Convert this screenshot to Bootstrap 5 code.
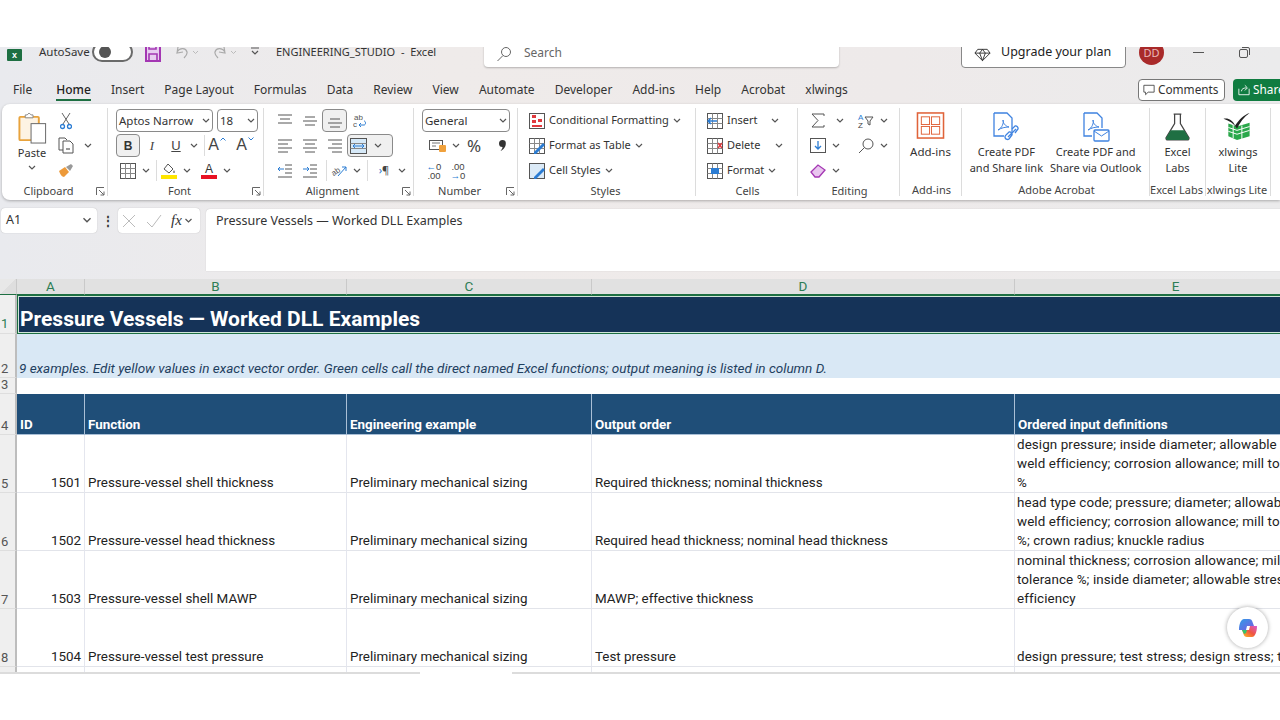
<!DOCTYPE html>
<html lang="en">
<head>
  <meta charset="UTF-8" />
  <title>ENGINEERING_STUDIO - Excel</title>
  <link href="https://cdn.jsdelivr.net/npm/bootstrap@5.3.0/dist/css/bootstrap.min.css" rel="stylesheet" />
  <style>
    html, body { height: 720px; overflow: hidden; background: #fff; }
    body { font-family: "Noto Sans", "Open Sans", sans-serif; font-size: 12px; color: #333; }

    .app-shell { margin-top: 47px; height: 625px; overflow: hidden; position: relative;
      background: linear-gradient(90deg, #e9eaee 0, #efebea 35%, #eeeaea 70%, #ebebec 100%); }

    /* title bar */
    .title-bar { height: 30px; margin-top: -10px; white-space: nowrap; }
    .title-bar > * { flex: none; }
    .xl-logo { width: 15px; height: 12px; margin: 12px 0 0 7px; background: #1d6f42; border-radius: 1px; color: #fff;
      font: 700 9px/12px "Liberation Sans", sans-serif; text-align: center; }
    .auto-save { margin-left: 17px; width: 53px; font-size: 11.5px; line-height: 30px; }
    .save-toggle { width: 41px; height: 20px; border: 2px solid #6a6a6a; border-radius: 10px; background: #fff; margin-top: 5px; padding: 2px 0 0 5px; }
    .save-toggle i { display: block; width: 12px; height: 12px; border-radius: 50%; background: #555; }
    .save-ic { margin: 4px 0 0 11px; }
    .undo-ic { margin: 4px 0 0 11px; }
    .redo-ic { margin: 4px 0 0 12px; }
    .qat-ic { margin: 8px 0 0 13px; }
    .doc-name { width: 224px; padding-left: 16px; font-size: 11px; line-height: 30px; }
    .search-box { width: 355px; height: 30px; background: #fff; border-radius: 4px; box-shadow: 0 1px 2px rgba(0,0,0,.25); color: #666; padding: 0 0 5px 12px; gap: 12px; }
    .upgrade-btn { width: 165px; height: 31px; margin-left: 122px; background: #fff; border: 1px solid #888; border-radius: 4px; font-size: 12.5px; gap: 10px; padding: 0 0 5px 12px; color: #222; }
    .user-dot { width: 25px; height: 25px; margin: 3px 0 0 13px; border-radius: 50%; background: #a92a2a; color: #e9b9b9; font-size: 11px; text-align: center; line-height: 25px; }
    .win-min { width: 11px; height: 1px; background: #555; margin: 15px 0 0 29px; }
    .win-max { margin: 10px 0 0 35px; }

    /* tabs */
    .tab-row { height: 25px; margin-top: 12px; padding-left: 13px; gap: 20.1px; font-size: 12px; white-space: nowrap; }
    .tab-item { line-height: 22px; color: #333; }
    .tab-on { color: #222; font-weight: 500; border-bottom: 2px solid #1d6f42; height: 22px; }
    .cmt-btn { position: absolute; top: 32px; left: 1138px; width: 87px; height: 22px; background: #fff; border: 1px solid #777; border-radius: 4px; gap: 3px; padding-left: 4px; font-size: 11.8px; }
    .share-btn { position: absolute; top: 32px; left: 1233px; width: 60px; height: 22px; background: #107c41; border-radius: 4px; color: #fff; gap: 3px; padding-left: 5px; font-size: 11.8px; }

    /* ribbon */
    .rib-bar { height: 96px; margin-left: 2px; background: #fff; border-radius: 8px 0 0 8px; box-shadow: 0 1px 3px rgba(0,0,0,.28); padding-top: 4px; }
    .rib-grp { flex: none; height: 88px; display: flex; flex-direction: column; border-right: 1px solid #dcdcdc; }
    .g-clip { width: 106px; } .g-font { width: 156px; } .g-align { width: 150px; } .g-num { width: 104px; }
    .g-style { width: 178px; } .g-cells { width: 102px; } .g-edit { width: 102px; } .g-addin { width: 62px; }
    .g-pdf { width: 188px; } .g-labs { width: 56px; } .g-wings { width: 65px; }
    .grp-body { height: 77px; display: flex; }
    .grp-foot { display: grid; grid-template-columns: 1fr auto 1fr; font-size: 11px; line-height: 12px; color: #444; padding: 2px 2px 0 0; white-space: nowrap; }
    .grp-foot svg { justify-self: end; margin-top: 2px; }
    .foot-launch > span:nth-child(2) { transform: translateX(-5px); }
    .foot-plain > span:nth-child(2) { transform: translateX(2px); }
    .rib-row { height: 25px; display: flex; align-items: center; flex: none; white-space: nowrap; }
    .ic-cell { width: 24px; height: 23px; display: flex; align-items: center; justify-content: center; flex: none; }
    .ic-wide { width: 25px; }
    .ic-chev { width: 12px; height: 23px; display: flex; align-items: center; justify-content: center; flex: none; }
    .ic-on { background: #f0f0f0; border: 1px solid #8a8a8a; border-radius: 4px; }
    .rib-sep { width: 1px; height: 21px; background: #dcdcdc; flex: none; }
    .dd-box { height: 23px; background: #fff; border: 1px solid #8a8a8a; border-radius: 4px; padding: 0 2px; font-size: 11.5px; flex: none; display: flex; align-items: center; justify-content: space-between; color: #333; }
    .dd-font { width: 97px; } .dd-size { width: 41px; } .dd-merge { width: 46px; background: #f0f0f0; } .dd-num { width: 88px; }
    .big-btn { display: flex; flex-direction: column; align-items: center; text-align: center; line-height: 15.5px; font-size: 11px; flex: none; color: #333; }
    .paste-btn { width: 60px; }
    .paste-btn svg:first-child { margin: 4px 0 0 2px; }
    .paste-btn span { margin-top: 1px; }
    .clip-tools { margin-left: -8px; }
    .addin-ic { margin: 4px 0 5px; }
    .addin-btn { font-size: 11.5px; }
    .pdf-ic { margin: 4px 0 2px; }
    .pdf-wrap { gap: 7px; }
    .labs-ic { margin: 4px 0 3px; }
    .glyph-b { font: 700 12px "Liberation Sans", sans-serif; color: #333; }
    .glyph-i { font: italic 13px "Liberation Serif", serif; color: #444; }
    .glyph-u { font: 13px "Liberation Sans", sans-serif; text-decoration: underline; color: #444; }
    .glyph-a { font: 16px "Liberation Sans", sans-serif; color: #444; gap: 1px; align-items: flex-start; padding-top: 2px; }
    .glyph-a svg { margin-top: 1px; }
    .fill-bar { display: block; width: 16px; height: 4px; background: #ffe600; }
    .color-a { font: 12px/12px "Liberation Sans", sans-serif; color: #333; border-bottom: 4px solid #e81123; width: 16px; text-align: center; }
    .para-ic { font-size: 11px; color: #444; }
    .para-ic span { color: #2b7cd3; }
    .num-pc { font-size: 17px; color: #444; }
    .tiny-num { font: 9.5px/9px "Liberation Sans", sans-serif; color: #444; }
    .tiny-num span span { color: #2b7cd3; }
    .style-lbl { font-size: 11px; white-space: nowrap; }
    .lbl-ins { width: 40px; } .lbl-del { width: 44px; }
    .g-style .grp-body, .g-cells .grp-body { padding-left: 11px; }
    .edit-col { width: 48px; }

    /* formula bar */
    .fx-row { height: 79px; padding-top: 8px; }
    .name-box { width: 96px; height: 25px; margin-left: 1px; background: #fff; border-radius: 4px; box-shadow: 0 0 1px rgba(0,0,0,.3); padding: 0 5px; font-size: 12.5px; }
    .fx-dots { width: 21px; text-align: center; font-weight: 700; line-height: 25px; }
    .fx-tools { width: 82px; height: 25px; background: #fff; border-radius: 4px; box-shadow: 0 0 1px rgba(0,0,0,.3); padding: 0 4px; gap: 10px; }
    .fx-tools em { font: italic 15px "Liberation Serif", serif; color: #333; margin-left: -1px; }
    .fx-tools svg:last-child { margin-left: -8px; }
    .fx-input { flex: 1; height: 62px; margin-left: 6px; margin-top: 1px; background: #fff; border-radius: 4px 0 0 0; padding: 3px 0 0 10px; font-size: 12.5px; color: #333; box-shadow: 0 0 1px rgba(0,0,0,.25); }

    /* sheet */
    .grid-wrap { height: 393px; overflow: hidden; background: #fff; }
    .xl-sheet { table-layout: fixed; width: 1337px; border-collapse: separate; border-spacing: 0; font-family: "Roboto", sans-serif; font-size: 13.4px; color: #222; }
    .xl-sheet td, .xl-sheet th { padding: 0 3px; vertical-align: bottom; font-weight: 400; white-space: nowrap; overflow: hidden; border-right: 1px solid #e4e6ee; border-bottom: 1px solid #e2e4ea; line-height: 19px; }
    .col-no { width: 17px; } .col-a { width: 68px; } .col-b { width: 262px; } .col-c { width: 245px; } .col-d { width: 423px; } .col-e { width: 322px; }
    .h-39 { height: 39px; } .h-44 { height: 44px; } .h-15 { height: 15px; } .h-41 { height: 41px; } .h-58 { height: 58px; } .h-20 { height: 20px; }
    .col-head th { height: 16px; background: #e1e1e1; color: #2d7d55; text-align: center; line-height: 15px; padding: 0; font-size: 13.5px; border-right: 1px solid #c9c9c9; border-bottom: 1px solid #1d6f42; }
    .xl-sheet .row-no { background: #efefef; color: #555; padding: 0 0 2px 1px; border-right: 2px solid #bdbdbd; border-bottom: 1px solid #dedede; font-size: 13px; text-align: left; line-height: 13px; }
    .xl-sheet .row-sel { color: #2d7d55; padding-bottom: 3px; }
    .xl-sheet .col-head th.grid-corner { background: linear-gradient(135deg, #e8e8e8 50%, #dedede 50%); }
    .xl-sheet td.title-cell { background: #153358; color: #fff; font-weight: 700; font-size: 21px; line-height: 30px; padding: 0 3px; box-shadow: inset 0 0 0 1px #1d6f42, inset 0 0 0 2px #cfe6d8; border: 0; }
    .xl-sheet td.note-cell { background: #d9e8f5; color: #1f4060; font-style: italic; font-size: 13.5px; padding-left: 2px; border-right: 0; border-bottom: 0; }
    .xl-sheet .head-cell { background: #1f4e78; color: #fff; font-weight: 700; border-right: 1px solid #a9bfd6; border-bottom: 1px solid #a9bfd6; }
    .xl-sheet td.id-cell { text-align: right; }
    .xl-sheet td.def-cell { letter-spacing: .1px; padding-left: 2px; }
    .sheet-end { height: 2px; background: linear-gradient(90deg, #dcdcdc 420px, #fff 420px, #fff 512px, #dcdcdc 512px); }

    .copilot-btn { position: absolute; left: 1227px; top: 560px; width: 41px; height: 41px; border-radius: 50%; background: #fff; box-shadow: 0 0 4px rgba(0,0,0,.35); display: flex; align-items: center; justify-content: center; }
  </style>
</head>
<body>

<svg width="0" height="0" class="d-block">
  <symbol id="chev" viewBox="0 0 8 6"><path d="M1 1l3 3 3-3" fill="none" stroke="#555" stroke-width="1.2"/></symbol>
  <symbol id="launch" viewBox="0 0 9 9"><path d="M.5 8V.5H8M3 3l5 5M8 4.5V8H4.5" fill="none" stroke="#666"/></symbol>
  <symbol id="al-top" viewBox="0 0 16 16"><path d="M1 2h14M3 6h10M1 10h14" stroke="#555" fill="none"/></symbol>
  <symbol id="al-mid" viewBox="0 0 16 16"><path d="M3 4h10M1 8h14M3 12h10" stroke="#555" fill="none"/></symbol>
  <symbol id="al-bot" viewBox="0 0 16 16"><path d="M3 6h10M1 10h14M3 14h10" stroke="#555" fill="none"/></symbol>
  <symbol id="tx-l" viewBox="0 0 16 16"><path d="M1 2h14M1 6h10M1 10h14M1 14h10" stroke="#555" fill="none"/></symbol>
  <symbol id="tx-c" viewBox="0 0 16 16"><path d="M1 2h14M3 6h10M1 10h14M3 14h10" stroke="#555" fill="none"/></symbol>
  <symbol id="tx-r" viewBox="0 0 16 16"><path d="M1 2h14M5 6h10M1 10h14M5 14h10" stroke="#555" fill="none"/></symbol>
  <symbol id="tbl-ic" viewBox="0 0 16 16"><rect x=".5" y=".5" width="15" height="15" fill="#fff" stroke="#555"/><path d="M.5 5.5h15M.5 10.5h15M5.5.5v15M10.5.5v15" stroke="#888" fill="none"/></symbol>
</svg>

<div class="app-shell">

  <!-- title bar -->
  <div class="title-bar d-flex">
    <div class="xl-logo">x</div>
    <div class="auto-save">AutoSave</div>
    <div class="save-toggle"><i></i></div>
    <svg class="save-ic" width="18" height="22" viewBox="0 0 18 22"><path d="M2 2h11l3 3v15H2z" fill="#e7cdf0" stroke="#a437b3" stroke-width="2"/><path d="M5 2v6h7V2M5 20v-7h8v7" fill="none" stroke="#a437b3" stroke-width="1.6"/></svg>
    <svg class="undo-ic" width="26" height="20" viewBox="0 0 26 20"><path d="M5 6l-1 6 6-1M4 11c3-5 9-4 10 0 .5 2-1 4-3 6" fill="none" stroke="#aaa" stroke-width="1.2"/><path d="M20 10l2.500 2.500L25 10" fill="none" stroke="#bbb"/></svg>
    <svg class="redo-ic" width="26" height="20" viewBox="0 0 26 20"><path d="M13 6l1 6-6-1M14 11C11 6 5 7 4 11c-.5 2 1 4 3 6" fill="none" stroke="#aaa" stroke-width="1.2"/><path d="M20 10l2.500 2.500L25 10" fill="none" stroke="#bbb"/></svg>
    <svg class="qat-ic" width="10" height="10" viewBox="0 0 10 10"><path d="M1 3h8M2 6l3 3 3-3" fill="none" stroke="#555" stroke-width="1.2"/></svg>
    <div class="doc-name">ENGINEERING_STUDIO&nbsp; -&nbsp; Excel</div>
    <div class="search-box d-flex align-items-end">
      <svg width="16" height="16" viewBox="0 0 16 16"><circle cx="10" cy="6" r="4.500" fill="none" stroke="#666"/><path d="M7 9.500L1.500 15" stroke="#666"/></svg>
      <span>Search</span>
    </div>
    <div class="upgrade-btn d-flex align-items-end">
      <svg width="17" height="14" viewBox="0 0 18 14"><path d="M4 1h10l3 4-8 8-8-8zM1 5h16M6 5l3 8 3-8M6 5l3-4 3 4" fill="none" stroke="#333"/></svg>
      <span>Upgrade your plan</span>
    </div>
    <div class="user-dot">DD</div>
    <div class="win-min"></div>
    <svg class="win-max" width="11" height="11" viewBox="0 0 11 11"><rect x=".5" y="2.500" width="8" height="8" rx="1.500" fill="none" stroke="#555"/><path d="M3 .5h6a1.500 1.500 0 0 1 1.500 1.500v6" fill="none" stroke="#555"/></svg>
  </div>

  <!-- tabs -->
  <div class="tab-row d-flex">
    <span class="tab-item">File</span>
    <span class="tab-item tab-on ms-1">Home</span>
    <span class="tab-item">Insert</span>
    <span class="tab-item">Page Layout</span>
    <span class="tab-item">Formulas</span>
    <span class="tab-item">Data</span>
    <span class="tab-item">Review</span>
    <span class="tab-item">View</span>
    <span class="tab-item">Automate</span>
    <span class="tab-item">Developer</span>
    <span class="tab-item">Add-ins</span>
    <span class="tab-item">Help</span>
    <span class="tab-item">Acrobat</span>
    <span class="tab-item">xlwings</span>
  </div>
  <div class="cmt-btn d-flex align-items-center">
    <svg width="12" height="12" viewBox="0 0 14 13"><path d="M1 1h12v8H6l-3 3V9H1z" fill="none" stroke="#444"/></svg>Comments
  </div>
  <div class="share-btn d-flex align-items-center">
    <svg width="12" height="12" viewBox="0 0 14 13"><path d="M1 5v7h12V5M4 8c0-3 3-4 6-4M8 1l3 3-3 3" fill="none" stroke="#fff"/></svg>Share
  </div>

  <!-- ribbon -->
  <div class="rib-bar d-flex">

    <div class="rib-grp g-clip">
      <div class="grp-body">
        <div class="big-btn paste-btn">
          <svg width="30" height="32" viewBox="0 0 30 33"><rect x="1" y="5" width="20" height="24" rx="1" fill="#fdf3e3" stroke="#e8a33d" stroke-width="2"/><path d="M7 6V3h2l2-2 2 2h2v3z" fill="#fff" stroke="#888"/><rect x="13" y="12" width="15" height="20" fill="#fff" stroke="#666"/></svg>
          <span>Paste</span>
          <svg class="mt-1" width="8" height="6"><use href="#chev"/></svg>
        </div>
        <div class="clip-tools">
          <div class="rib-row"><div class="ic-cell">
            <svg width="12" height="18" viewBox="0 0 12 18"><path d="M2 1l7 11M10 1L3 12" stroke="#666" fill="none"/><circle cx="2.500" cy="14.500" r="2" fill="none" stroke="#2b7cd3" stroke-width="1.300"/><circle cx="9.500" cy="14.500" r="2" fill="none" stroke="#2b7cd3" stroke-width="1.300"/></svg>
          </div></div>
          <div class="rib-row"><div class="ic-cell">
            <svg width="17" height="17" viewBox="0 0 17 17"><path d="M5 13H1V1h6l2 2" fill="none" stroke="#555"/><path d="M5 4h7l3 3v9H5z" fill="#fff" stroke="#555"/><path d="M8 11h4v2H8z" fill="#999"/></svg>
          </div><div class="ic-chev ms-1"><svg width="8" height="6"><use href="#chev"/></svg></div></div>
          <div class="rib-row"><div class="ic-cell">
            <svg width="16" height="15" viewBox="0 0 16 15"><path d="M1 8l6-4 4 5-5 5C4 14 2 11 1 8z" fill="#ed9a3a"/><path d="M8 4l5-3 2 2-3 5z" fill="#999"/></svg>
          </div></div>
        </div>
      </div>
      <div class="grp-foot foot-launch"><span></span><span>Clipboard</span><svg width="9" height="9"><use href="#launch"/></svg></div>
    </div>

    <div class="rib-grp g-font">
      <div class="grp-body flex-column ps-2">
        <div class="rib-row gap-1">
          <div class="dd-box dd-font">Aptos Narrow<svg width="8" height="6"><use href="#chev"/></svg></div>
          <div class="dd-box dd-size">18<svg width="8" height="6"><use href="#chev"/></svg></div>
        </div>
        <div class="rib-row">
          <div class="ic-cell ic-on glyph-b">B</div>
          <div class="ic-cell glyph-i">I</div>
          <div class="ic-cell glyph-u">U</div>
          <div class="ic-chev"><svg width="8" height="6"><use href="#chev"/></svg></div>
          <div class="rib-sep ms-1"></div>
          <div class="ic-cell glyph-a">A<svg width="6" height="4" viewBox="0 0 6 4"><path d="M.5 3.500L3 1l2.500 2.500" fill="none" stroke="#2b7cd3"/></svg></div>
          <div class="ic-cell glyph-a ms-1">A<svg width="6" height="4" viewBox="0 0 6 4"><path d="M.5.5L3 3 5.500.5" fill="none" stroke="#2b7cd3"/></svg></div>
        </div>
        <div class="rib-row">
          <div class="ic-cell"><svg width="16" height="16"><use href="#tbl-ic"/></svg></div>
          <div class="ic-chev"><svg width="8" height="6"><use href="#chev"/></svg></div>
          <div class="rib-sep ms-1"></div>
          <div class="ic-cell flex-column">
            <svg width="14" height="12" viewBox="0 0 14 12"><path d="M6 1l5 5-4 4-5-4z" fill="#fff" stroke="#555"/><path d="M12 7c1 2 1 3 0 3s-1-1 0-3z" fill="#555"/></svg>
            <span class="fill-bar"></span>
          </div>
          <div class="ic-chev"><svg width="8" height="6"><use href="#chev"/></svg></div>
          <div class="ic-cell ms-1"><span class="color-a">A</span></div>
          <div class="ic-chev"><svg width="8" height="6"><use href="#chev"/></svg></div>
        </div>
      </div>
      <div class="grp-foot foot-launch"><span></span><span>Font</span><svg width="9" height="9"><use href="#launch"/></svg></div>
    </div>

    <div class="rib-grp g-align">
      <div class="grp-body flex-column ps-2">
        <div class="rib-row">
          <div class="ic-cell ic-wide"><svg width="16" height="16"><use href="#al-top"/></svg></div>
          <div class="ic-cell ic-wide"><svg width="16" height="16"><use href="#al-mid"/></svg></div>
          <div class="ic-cell ic-on ic-wide"><svg width="16" height="16"><use href="#al-bot"/></svg></div>
          <div class="ic-cell ic-wide">
            <svg width="16" height="16" viewBox="0 0 16 16"><text x="2" y="7" font-size="8" fill="#555" font-family="Liberation Sans">ab</text><text x="1" y="14" font-size="8" fill="#555" font-family="Liberation Sans">c</text><path d="M7 12h5c2 0 2-4 0-4M9 10l-2 2 2 2" fill="none" stroke="#2b7cd3"/></svg>
          </div>
        </div>
        <div class="rib-row">
          <div class="ic-cell ic-wide"><svg width="16" height="16"><use href="#tx-l"/></svg></div>
          <div class="ic-cell ic-wide"><svg width="16" height="16"><use href="#tx-c"/></svg></div>
          <div class="ic-cell ic-wide"><svg width="16" height="16"><use href="#tx-r"/></svg></div>
          <div class="dd-box dd-merge">
            <svg width="18" height="16" viewBox="0 0 18 16"><rect x=".5" y=".5" width="16" height="15" fill="#d6e9f8" stroke="#555"/><path d="M.5 5.500h16M.5 10.500h16" stroke="#888"/><path d="M3 8h11M5 6L3 8l2 2M12 6l2 2-2 2" fill="none" stroke="#2b7cd3"/></svg>
            <svg class="me-2" width="8" height="6"><use href="#chev"/></svg>
          </div>
        </div>
        <div class="rib-row">
          <div class="ic-cell ic-wide">
            <svg width="16" height="14" viewBox="0 0 16 14"><path d="M8 1h7M8 5h7M8 9h7M1 13h14" stroke="#555"/><path d="M7 5H1M3 3L1 5l2 2" fill="none" stroke="#2b7cd3"/></svg>
          </div>
          <div class="ic-cell ic-wide">
            <svg width="16" height="14" viewBox="0 0 16 14"><path d="M8 1h7M8 5h7M8 9h7M1 13h14" stroke="#555"/><path d="M1 5h6M5 3l2 2-2 2" fill="none" stroke="#2b7cd3"/></svg>
          </div>
          <div class="rib-sep ms-1"></div>
          <div class="ic-cell">
            <svg width="18" height="16" viewBox="0 0 18 16"><text x="1" y="11" font-size="8" fill="#555" transform="rotate(-35 6 8)" font-family="Liberation Sans">ab</text><path d="M8 13L16 4M12 4h4v4" fill="none" stroke="#2b7cd3"/></svg>
          </div>
          <div class="ic-chev"><svg width="8" height="6"><use href="#chev"/></svg></div>
          <div class="rib-sep ms-1"></div>
          <div class="ic-cell ms-1 para-ic"><span>›</span>¶</div>
          <div class="ic-chev"><svg width="8" height="6"><use href="#chev"/></svg></div>
        </div>
      </div>
      <div class="grp-foot foot-launch"><span></span><span>Alignment</span><svg width="9" height="9"><use href="#launch"/></svg></div>
    </div>

    <div class="rib-grp g-num">
      <div class="grp-body flex-column ps-2">
        <div class="rib-row"><div class="dd-box dd-num">General<svg width="8" height="6"><use href="#chev"/></svg></div></div>
        <div class="rib-row">
          <div class="ic-cell ms-1">
            <svg width="18" height="15" viewBox="0 0 18 15"><rect x=".5" y="2.500" width="13" height="9" fill="#fff" stroke="#555"/><path d="M3 5h8M3 8h4" stroke="#777"/><rect x="10" y="7" width="7" height="7" rx="1" fill="#f0a13c"/></svg>
          </div>
          <div class="ic-chev"><svg width="8" height="6"><use href="#chev"/></svg></div>
          <div class="ic-cell num-pc">%</div>
          <div class="ic-cell ms-1">
            <svg width="7" height="11" viewBox="0 0 7 11"><path d="M3.500 0a3.300 3.300 0 0 1 3.300 3.500C6.800 7 4.500 9.800 1.500 11 3 9.300 3.500 8 3.500 7A3.500 3.500 0 0 1 3.500 0z" fill="#333"/></svg>
          </div>
        </div>
        <div class="rib-row">
          <div class="ic-cell tiny-num flex-column"><span><span>←</span>0</span><span>.00</span></div>
          <div class="ic-cell tiny-num flex-column"><span>.00</span><span><span>→</span>0</span></div>
        </div>
      </div>
      <div class="grp-foot foot-launch"><span></span><span>Number</span><svg width="9" height="9"><use href="#launch"/></svg></div>
    </div>

    <div class="rib-grp g-style">
      <div class="grp-body flex-column">
        <div class="rib-row gap-1">
          <svg width="16" height="16" viewBox="0 0 16 16"><rect x=".5" y=".5" width="15" height="15" fill="#fff" stroke="#555"/><path d="M3 2h4v3H3zM3 7h4v3H3zM9 6h4v3H9zM3 12h10v2H3z" fill="#e0393e"/></svg>
          <span class="style-lbl">Conditional Formatting</span><svg width="8" height="6"><use href="#chev"/></svg>
        </div>
        <div class="rib-row gap-1">
          <svg width="16" height="16" viewBox="0 0 16 16"><use href="#tbl-ic"/><path d="M5 14l9-9 2 2-9 9H5z" fill="#2b7cd3"/></svg>
          <span class="style-lbl">Format as Table</span><svg width="8" height="6"><use href="#chev"/></svg>
        </div>
        <div class="rib-row gap-1">
          <svg width="16" height="16" viewBox="0 0 16 16"><rect x=".5" y=".5" width="15" height="15" fill="#dbeaf7" stroke="#555"/><path d="M5 14l9-9 2 2-9 9H5z" fill="#2b7cd3"/></svg>
          <span class="style-lbl">Cell Styles</span><svg width="8" height="6"><use href="#chev"/></svg>
        </div>
      </div>
      <div class="grp-foot"><span></span><span>Styles</span><span></span></div>
    </div>

    <div class="rib-grp g-cells">
      <div class="grp-body flex-column">
        <div class="rib-row gap-1">
          <svg width="16" height="16" viewBox="0 0 16 16"><use href="#tbl-ic"/><path d="M1 8h9M4 5L1 8l3 3" fill="none" stroke="#2b7cd3" stroke-width="1.500"/></svg>
          <span class="style-lbl lbl-ins">Insert</span><svg width="8" height="6"><use href="#chev"/></svg>
        </div>
        <div class="rib-row gap-1">
          <svg width="16" height="16" viewBox="0 0 16 16"><use href="#tbl-ic"/><path d="M11 5l4 5M15 5l-4 5" stroke="#e0393e" stroke-width="1.500"/></svg>
          <span class="style-lbl lbl-del">Delete</span><svg width="8" height="6"><use href="#chev"/></svg>
        </div>
        <div class="rib-row gap-1">
          <svg width="16" height="16" viewBox="0 0 16 16"><use href="#tbl-ic"/><rect x="4" y="5" width="8" height="6" fill="#2b7cd3"/></svg>
          <span class="style-lbl">Format</span><svg width="8" height="6"><use href="#chev"/></svg>
        </div>
      </div>
      <div class="grp-foot foot-plain"><span></span><span>Cells</span><span></span></div>
    </div>

    <div class="rib-grp g-edit">
      <div class="grp-body ps-2">
        <div class="edit-col">
          <div class="rib-row">
            <div class="ic-cell"><svg width="14" height="15" viewBox="0 0 14 15"><path d="M13 3V1H1l6 6.500L1 14h12v-2" fill="none" stroke="#555"/></svg></div>
            <div class="ic-chev ms-1"><svg width="8" height="6"><use href="#chev"/></svg></div>
          </div>
          <div class="rib-row">
            <div class="ic-cell"><svg width="16" height="15" viewBox="0 0 16 15"><rect x=".5" y=".5" width="15" height="14" fill="#fff" stroke="#555"/><path d="M8 3v8M5 8l3 3 3-3" fill="none" stroke="#2b7cd3" stroke-width="1.300"/></svg></div>
            <div class="ic-chev"><svg width="8" height="6"><use href="#chev"/></svg></div>
          </div>
          <div class="rib-row">
            <div class="ic-cell"><svg width="16" height="14" viewBox="0 0 16 14"><path d="M1 8l7-7 7 5-6 7H5z" fill="#e9c6ef" stroke="#a437b3" stroke-width="1.300"/></svg></div>
            <div class="ic-chev"><svg width="8" height="6"><use href="#chev"/></svg></div>
          </div>
        </div>
        <div>
          <div class="rib-row">
            <div class="ic-cell">
              <svg width="18" height="16" viewBox="0 0 18 16"><text x="1" y="7" font-size="8" fill="#2b7cd3" font-family="Liberation Sans">A</text><text x="1" y="15" font-size="8" fill="#444" font-family="Liberation Sans">Z</text><path d="M8 4h8l-3 4v4l-2-1V8z" fill="none" stroke="#555"/></svg>
            </div>
            <div class="ic-chev"><svg width="8" height="6"><use href="#chev"/></svg></div>
          </div>
          <div class="rib-row">
            <div class="ic-cell"><svg width="16" height="16" viewBox="0 0 16 16"><circle cx="10" cy="6" r="5" fill="none" stroke="#555"/><path d="M6.500 9.500L1 15" stroke="#555"/></svg></div>
            <div class="ic-chev"><svg width="8" height="6"><use href="#chev"/></svg></div>
          </div>
        </div>
      </div>
      <div class="grp-foot foot-plain"><span></span><span>Editing</span><span></span></div>
    </div>

    <div class="rib-grp g-addin">
      <div class="grp-body justify-content-center">
        <div class="big-btn addin-btn">
          <svg class="addin-ic" width="29" height="27" viewBox="0 0 29 28"><rect x="1" y="1" width="27" height="26" fill="#fff" stroke="#e0633a" stroke-width="1.600"/><rect x="5" y="5" width="8.500" height="8" fill="none" stroke="#e0633a"/><rect x="15.500" y="5" width="8.500" height="8" fill="none" stroke="#e0633a"/><rect x="5" y="15" width="8.500" height="8" fill="none" stroke="#e0633a"/><rect x="15.500" y="15" width="8.500" height="8" fill="none" stroke="#e0633a"/></svg>
          <span>Add-ins</span>
        </div>
      </div>
      <div class="grp-foot foot-plain"><span></span><span>Add-ins</span><span></span></div>
    </div>

    <div class="rib-grp g-pdf">
      <div class="grp-body justify-content-center pdf-wrap">
        <div class="big-btn">
          <svg class="pdf-ic" width="28" height="30" viewBox="0 0 28 30"><path d="M2 1h13l5 5v14M2 1v23h10" fill="none" stroke="#3f83e0" stroke-width="1.300"/><path d="M6 18c4-2 6-7 5-10 0 3 2 6 6 7-4 0-8 1-11 3z" fill="none" stroke="#3f83e0"/><path d="M16 25l8-8M14 23l3-3a2.500 2.500 0 0 1 3 3l-3 4a2.500 2.500 0 0 1-3-4zM20 17l3-3a2.500 2.500 0 0 1 3 3l-3 4" fill="none" stroke="#3f83e0" stroke-width="1.300"/></svg>
          <span>Create PDF<br>and Share link</span>
        </div>
        <div class="big-btn">
          <svg class="pdf-ic" width="28" height="30" viewBox="0 0 28 30"><path d="M2 1h13l5 5v10M2 1v23h8" fill="none" stroke="#3f83e0" stroke-width="1.300"/><path d="M6 18c4-2 6-7 5-10 0 3 2 6 6 7-4 0-8 1-11 3z" fill="none" stroke="#3f83e0"/><rect x="12" y="18" width="15" height="11" rx="1" fill="#fff" stroke="#3f83e0" stroke-width="1.300"/><path d="M12 19l7.500 5 7.500-5" fill="none" stroke="#3f83e0"/></svg>
          <span>Create PDF and<br>Share via Outlook</span>
        </div>
      </div>
      <div class="grp-foot foot-plain"><span></span><span>Adobe Acrobat</span><span></span></div>
    </div>

    <div class="rib-grp g-labs">
      <div class="grp-body justify-content-center">
        <div class="big-btn">
          <svg class="labs-ic" width="25" height="29" viewBox="0 0 26 30"><path d="M9 2h8M10 2v10L1 27q0 2 2 2h20q2 0 2-2L16 12V2" fill="#fff" stroke="#444" stroke-width="1.300"/><path d="M6 19h14l5 8q0 2-2 2H3q-2 0-2-2z" fill="#1f6f43"/></svg>
          <span>Excel<br>Labs</span>
        </div>
      </div>
      <div class="grp-foot"><span></span><span>Excel Labs</span><span></span></div>
    </div>

    <div class="rib-grp g-wings">
      <div class="grp-body justify-content-center">
        <div class="big-btn">
          <svg class="labs-ic" width="32" height="29" viewBox="0 0 32 30"><path d="M6 12l9 3 13-4v14l-13 4-9-4z" fill="#2aa84a"/><path d="M6 16l9 3 13-4M6 20l9 3 13-4M11 13v14M20 14v14" stroke="#fff" fill="none"/><path d="M1 7c5-1 9 1 12 7 4-6 9-11 15-13-6 4-10 10-13 16-3-5-8-8-14-10z" fill="#222"/></svg>
          <span>xlwings<br>Lite</span>
        </div>
      </div>
      <div class="grp-foot"><span></span><span>xlwings Lite</span><span></span></div>
    </div>
  </div>

  <!-- formula bar -->
  <div class="fx-row d-flex align-items-start">
    <div class="name-box d-flex align-items-center justify-content-between">A1<svg width="10" height="7"><use href="#chev"/></svg></div>
    <div class="fx-dots">⋮</div>
    <div class="fx-tools d-flex align-items-center">
      <svg width="14" height="14" viewBox="0 0 14 14"><path d="M1 1l12 12M13 1L1 13" stroke="#bbb" fill="none"/></svg>
      <svg width="16" height="14" viewBox="0 0 16 14"><path d="M1 8l5 5 9-12" stroke="#bbb" fill="none"/></svg>
      <em>fx</em>
      <svg width="9" height="6"><use href="#chev"/></svg>
    </div>
    <div class="fx-input">Pressure Vessels — Worked DLL Examples</div>
  </div>

  <!-- sheet -->
  <div class="grid-wrap">
    <table class="xl-sheet">
      <colgroup><col class="col-no"><col class="col-a"><col class="col-b"><col class="col-c"><col class="col-d"><col class="col-e"></colgroup>
      <tr class="col-head"><th class="grid-corner"></th><th>A</th><th>B</th><th>C</th><th>D</th><th>E</th></tr>
      <tr class="h-39"><th class="row-no row-sel">1</th><td class="title-cell" colspan="5">Pressure Vessels — Worked DLL Examples</td></tr>
      <tr class="h-44"><th class="row-no">2</th><td class="note-cell" colspan="5">9 examples. Edit yellow values in exact vector order. Green cells call the direct named Excel functions; output meaning is listed in column D.</td></tr>
      <tr class="h-15"><th class="row-no">3</th><td colspan="5" class="border-0"></td></tr>
      <tr class="h-41"><th class="row-no">4</th><td class="head-cell">ID</td><td class="head-cell">Function</td><td class="head-cell">Engineering example</td><td class="head-cell">Output order</td><td class="head-cell">Ordered input definitions</td></tr>
      <tr class="h-58"><th class="row-no">5</th><td class="id-cell">1501</td><td>Pressure-vessel shell thickness</td><td>Preliminary mechanical sizing</td><td>Required thickness; nominal thickness</td><td class="def-cell">design pressure; inside diameter; allowable stress;<br>weld efficiency; corrosion allowance; mill tolerance<br>%</td></tr>
      <tr class="h-58"><th class="row-no">6</th><td class="id-cell">1502</td><td>Pressure-vessel head thickness</td><td>Preliminary mechanical sizing</td><td>Required head thickness; nominal head thickness</td><td class="def-cell">head type code; pressure; diameter; allowable stress;<br>weld efficiency; corrosion allowance; mill tolerance<br>%; crown radius; knuckle radius</td></tr>
      <tr class="h-58"><th class="row-no">7</th><td class="id-cell">1503</td><td>Pressure-vessel shell MAWP</td><td>Preliminary mechanical sizing</td><td>MAWP; effective thickness</td><td class="def-cell">nominal thickness; corrosion allowance; mill<br>tolerance %; inside diameter; allowable stress; weld<br>efficiency</td></tr>
      <tr class="h-58"><th class="row-no">8</th><td class="id-cell">1504</td><td>Pressure-vessel test pressure</td><td>Preliminary mechanical sizing</td><td>Test pressure</td><td class="def-cell">design pressure; test stress; design stress; test</td></tr>
      <tr class="h-20"><th class="row-no"></th><td></td><td></td><td></td><td></td><td></td></tr>
    </table>
  </div>

  <div class="copilot-btn">
    <svg width="22" height="22" viewBox="0 0 22 22">
      <defs>
        <linearGradient id="cpA" x1="0" y1="0" x2="1" y2="1"><stop offset="0" stop-color="#2f9be8"/><stop offset="1" stop-color="#7b5be0"/></linearGradient>
        <linearGradient id="cpB" x1="0" y1="1" x2="1" y2="0"><stop offset="0" stop-color="#ffc31f"/><stop offset=".5" stop-color="#f0553f"/><stop offset="1" stop-color="#d85bd0"/></linearGradient>
      </defs>
      <path d="M7 2h5c2 0 3 1 3.500 3L17 9H10l-1 4H2c0-6 2-11 5-11z" fill="url(#cpA)"/>
      <path d="M15 20h-5c-2 0-3-1-3.500-3L5 13h7l1-4h7c0 6-2 11-5 11z" fill="url(#cpB)"/>
      <path d="M5 13h5l-1 3-2 1z" fill="#35c26b"/>
    </svg>
  </div>
</div>

<div class="sheet-end"></div>

<script src="https://cdn.jsdelivr.net/npm/bootstrap@5.3.0/dist/js/bootstrap.bundle.min.js"></script>
</body>
</html>
